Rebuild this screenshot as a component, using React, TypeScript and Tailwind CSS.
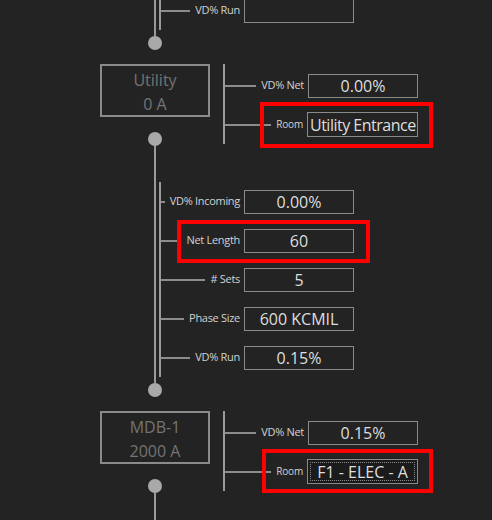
import React from "react";

// ─── Palette ──────────────────────────────────────────────────────────────────

const LINE = "bg-[#9a9a9a]";

type RowData = { label: string; value: string };

// ─── Pieces ───────────────────────────────────────────────────────────────────

function Dot() {
  return <div className="h-[14px] w-[14px] rounded-full bg-[#a9a9a9]" />;
}

function Row({
  label,
  small,
  children,
}: {
  label: string;
  small?: boolean;
  children: React.ReactNode;
}) {
  return (
    <div className="flex h-[39px] w-[193px] items-center">
      <div className="h-[2px] flex-1 bg-[#8c8c8c]" />
      <span
        className={`ml-[5px] whitespace-nowrap text-[#d2d2d2] ${
          small ? "text-[10px] tracking-[-0.2px]" : "text-[11px] tracking-[-0.3px]"
        }`}
      >
        {label}
      </span>
      <div className="ml-[4px]">{children}</div>
    </div>
  );
}

function ValueBox({ value }: { value: string }) {
  return (
    <div className="flex h-[24px] w-[110px] items-center justify-center border border-[#8a8a8a] text-[16px] leading-none text-[#dedede]">
      {value}
    </div>
  );
}

function RoomBox({ value, focused }: { value: string; focused?: boolean }) {
  if (focused) {
    return (
      <div className="h-[25px] w-[111px] border border-[#8a8a8a] bg-[#1b1b1b] p-[2px]">
        <div className="flex h-full w-full items-center justify-center border border-dotted border-[#8a8a8a] text-[16px] leading-none whitespace-nowrap text-[#dedede]">
          {value}
        </div>
      </div>
    );
  }
  return (
    <div className="flex h-[25px] w-[111px] items-center overflow-hidden border border-[#8a8a8a] pl-[2px] text-[16px] leading-none tracking-[-0.5px] whitespace-nowrap text-[#dedede]">
      {value}
    </div>
  );
}

function Cable({ rows }: { rows: RowData[] }) {
  return (
    <div className="flex flex-col">
      <div className="ml-[154px] flex">
        <div className={`w-[2px] ${LINE}`} />
        <div className="ml-[3px] pb-[6px] pt-[36px]">
          <div className="border-l-2 border-[#9a9a9a]">
            {rows.map((r) => (
              <Row key={r.label} label={r.label}>
                <ValueBox value={r.value} />
              </Row>
            ))}
          </div>
        </div>
      </div>
      <div className="ml-[148px]">
        <Dot />
      </div>
      <div className="h-[14px]" />
    </div>
  );
}

function Node({
  title,
  amps,
  vd,
  room,
  focused,
}: {
  title: string;
  amps: string;
  vd: string;
  room: string;
  focused?: boolean;
}) {
  return (
    <div className="ml-[100px] flex items-start">
      <div className="flex w-[110px] flex-col items-center">
        <div className="flex h-[53px] w-[110px] flex-col items-center justify-center border-2 border-[#8a8a8a] pt-[2px] text-[16px] leading-[24px] text-[#747474]">
          <span>{title}</span>
          <span>{amps}</span>
        </div>
        <div className="mt-[15px]">
          <Dot />
        </div>
      </div>
      <div className="ml-[13px] border-l-2 border-[#9a9a9a] pt-[2px]">
        <Row label="VD% Net">
          <ValueBox value={vd} />
        </Row>
        <Row label="Room" small>
          <RoomBox value={room} focused={focused} />
        </Row>
      </div>
    </div>
  );
}

// ─── Page ─────────────────────────────────────────────────────────────────────

export default function App() {
  return (
    <div className="relative h-[520px] w-[492px] overflow-hidden bg-[#232323] font-['Open_Sans','Noto_Sans',sans-serif]">
      <div className="mt-[-45px] flex flex-col">
        <Cable rows={[{ label: "VD% Run", value: "" }]} />
        <Node title="Utility" amps="0 A" vd="0.00%" room="Utility Entrance" />
        <Cable
          rows={[
            { label: "VD% Incoming", value: "0.00%" },
            { label: "Net Length", value: "60" },
            { label: "# Sets", value: "5" },
            { label: "Phase Size", value: "600 KCMIL" },
            { label: "VD% Run", value: "0.15%" },
          ]}
        />
        <Node title="MDB-1" amps="2000 A" vd="0.15%" room="F1 - ELEC - A" focused />
        <div className={`ml-[154px] h-[60px] w-[2px] ${LINE}`} />
      </div>

      {/* annotation boxes */}
      <div className="absolute left-[260px] top-[102px] h-[46px] w-[173px] border-4 border-[#ff0000]" />
      <div className="absolute left-[177px] top-[220px] h-[43px] w-[193px] border-4 border-[#ff0000]" />
      <div className="absolute left-[262px] top-[449px] h-[44px] w-[171px] border-4 border-[#ff0000]" />
    </div>
  );
}
